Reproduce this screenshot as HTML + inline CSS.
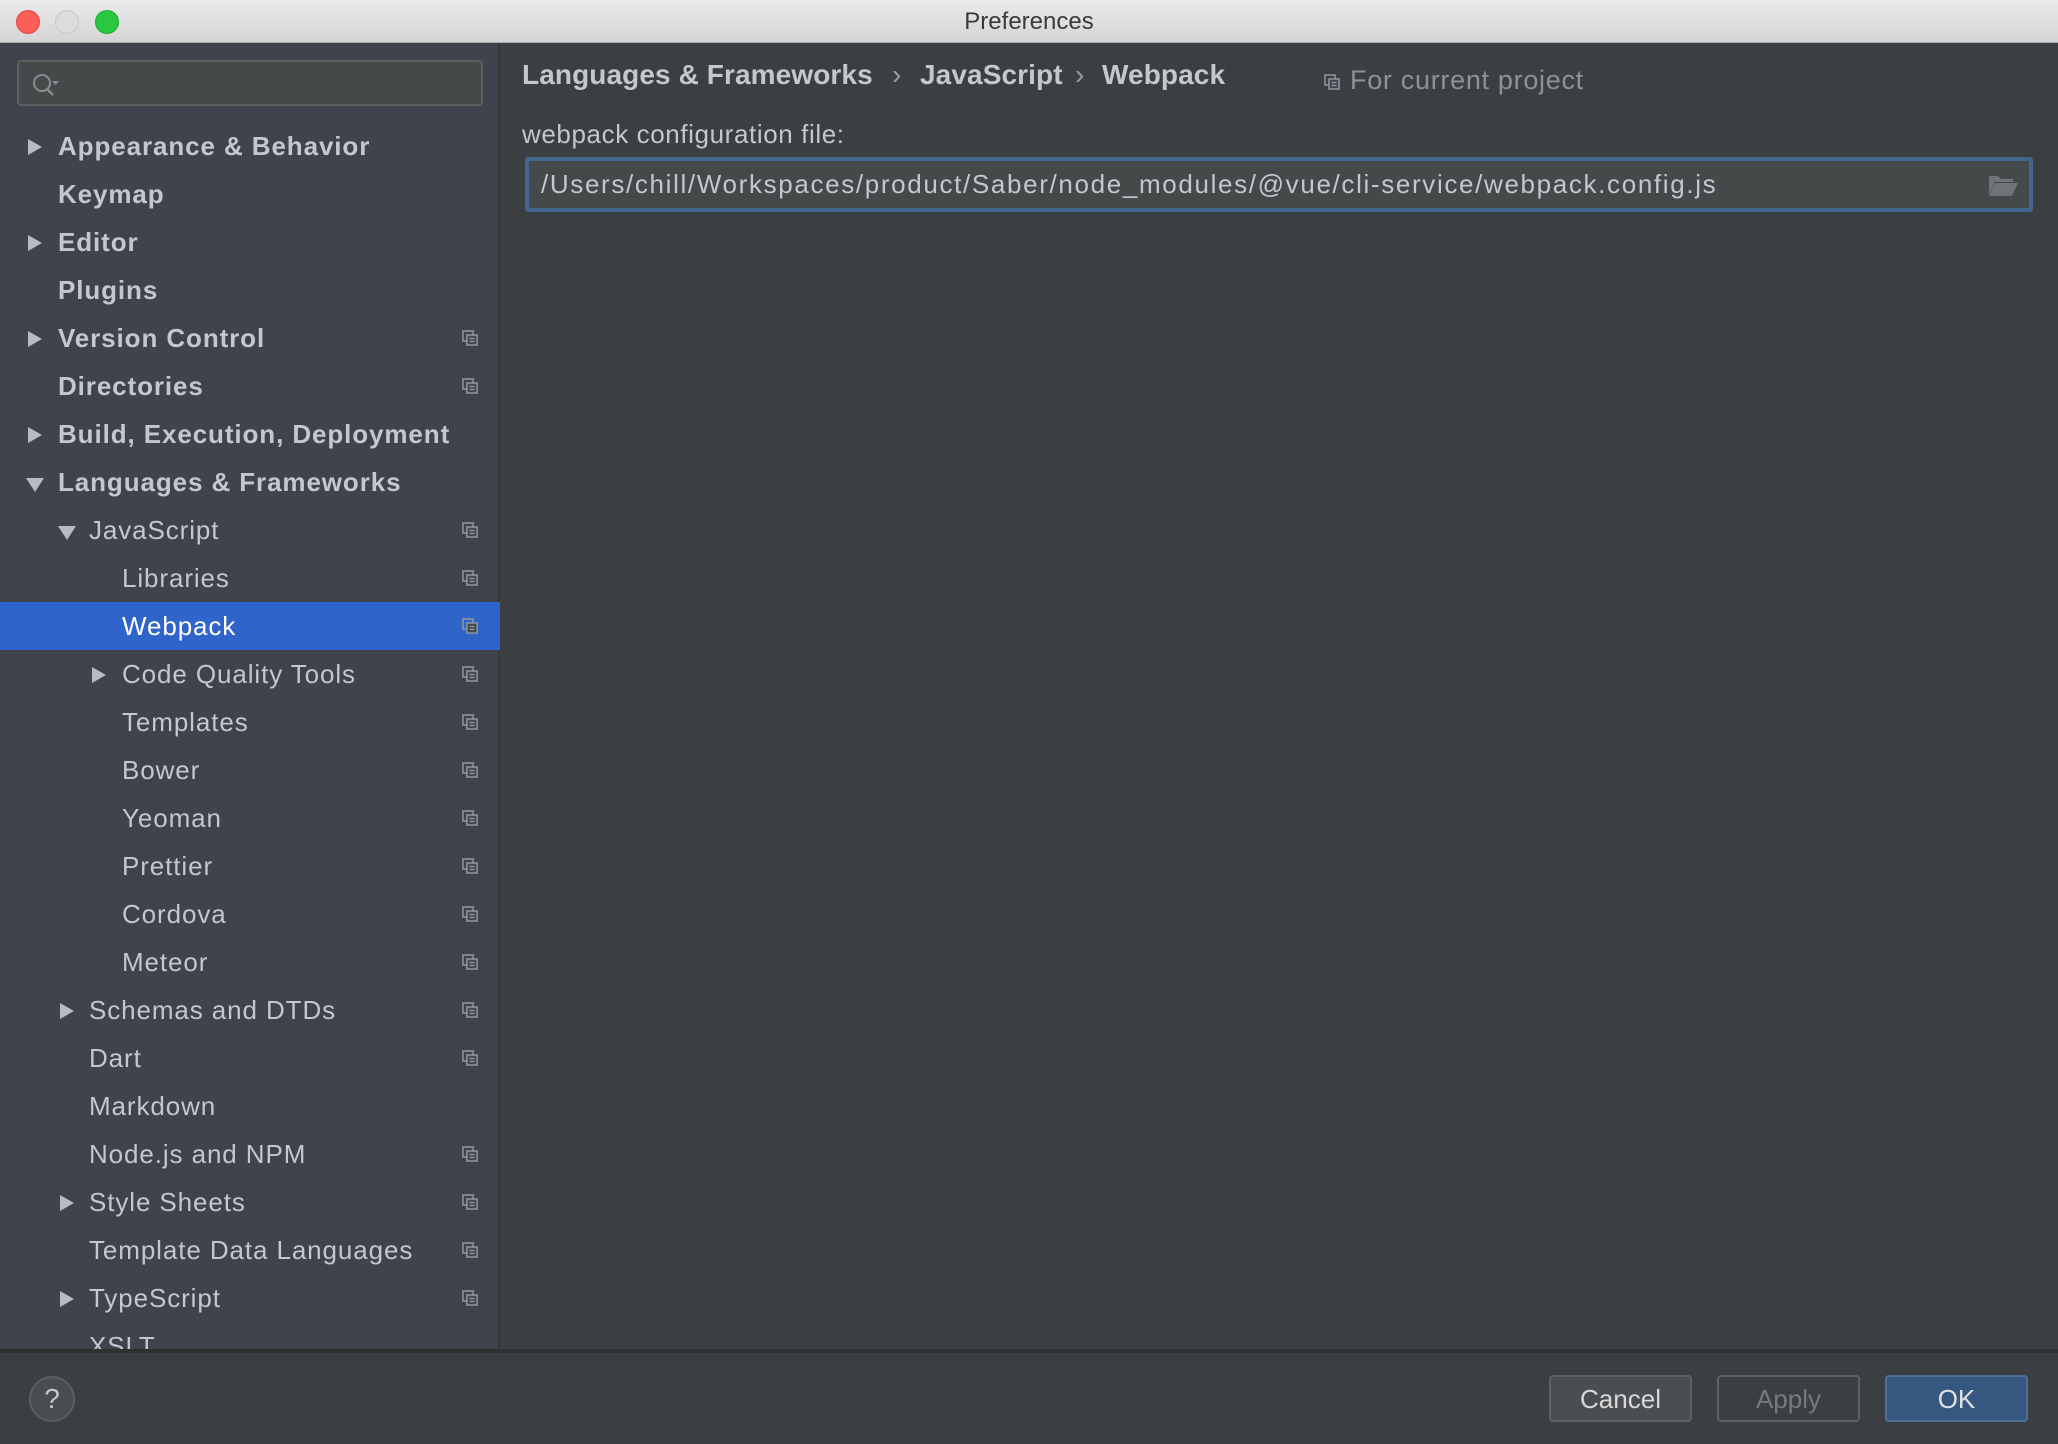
<!DOCTYPE html>
<html><head><meta charset="utf-8"><style>
*{margin:0;padding:0;box-sizing:border-box}
body{width:2058px;height:1444px;overflow:hidden;background:#3c3f41;font-family:"Liberation Sans",sans-serif;position:relative}
.title{position:absolute;left:0;top:0;width:2058px;height:43px;background:linear-gradient(#ebebeb,#d4d4d4);border-bottom:1px solid #a9a9a9;text-align:center;line-height:44px;font-size:24px;color:#3a3a3a}
.dot{position:absolute;top:10px;width:24px;height:24px;border-radius:50%}
.side{position:absolute;left:0;top:43px;width:500px;height:1306px;background:#3e434c;border-right:2px solid #353739;overflow:hidden}
.search{position:absolute;left:17px;top:17px;width:466px;height:46px;background:#45494a;border:2px solid #5e6060;border-radius:4px}
.row{position:absolute;left:0;width:500px;height:48px;line-height:48px;font-size:26px;letter-spacing:0.9px;color:#c4c7cc}
.row.b{font-weight:bold;letter-spacing:0.9px}
.row.sel{background:#2f65ca;color:#fff}
.arr{position:absolute;top:17px;width:0;height:0;border-top:8px solid transparent;border-bottom:8px solid transparent;border-left:14px solid #b8bbbf}
.down{position:absolute;top:20px;width:0;height:0;border-left:9px solid transparent;border-right:9px solid transparent;border-top:14px solid #b8bbbf}
.pi{position:absolute;left:462px;top:16px}
.main{position:absolute;left:502px;top:43px;width:1556px;height:1306px;background:#3c3f41}
.bc{position:absolute;top:16px;font-size:28px;letter-spacing:0.1px;font-weight:bold;color:#c4c7cc}
.foot{position:absolute;left:0;top:1349px;width:2058px;height:95px;background:#3c3f41;border-top:4px solid #2e3032}
.btn{position:absolute;top:22px;width:143px;height:47px;border-radius:4px;text-align:center;line-height:45px;font-size:26px}
</style></head><body>
<div class="title">Preferences
<div class="dot" style="left:16px;background:#fc5f57;border:1px solid #df4744"></div>
<div class="dot" style="left:55px;background:#dcdcdc;border:1px solid #c8c8c8"></div>
<div class="dot" style="left:95px;background:#28c940;border:1px solid #1aab29"></div>
</div>
<svg width="0" height="0" style="position:absolute"><defs><symbol id="pi" viewBox="0 0 16 16"><rect x="1" y="1" width="10" height="10" fill="none" stroke="#8c939b" stroke-width="1.6"/><rect x="5" y="5" width="10" height="10" fill="#3e434c" stroke="#8c939b" stroke-width="1.6"/><path d="M7.5 8.5h5M7.5 11.5h5" stroke="#8c939b" stroke-width="1.4"/></symbol></defs></svg>
<div class="side">
<div class="search"><svg width="40" height="40" style="position:absolute;left:8px;top:2px" viewBox="0 0 40 40"><circle cx="15" cy="19" r="8" fill="none" stroke="#8a8d90" stroke-width="2"/><path d="M20 25l6 6" stroke="#8a8d90" stroke-width="2.5"/><path d="M25 17h7l-3.5 4z" fill="#8a8d90"/></svg></div>
</div>
<div id="rows"></div>
<div class="main">
<div class="bc" style="left:20px">Languages &amp; Frameworks</div>
<div class="bc" style="left:390px;font-weight:normal;color:#9a9da0">›</div>
<div class="bc" style="left:418px">JavaScript</div>
<div class="bc" style="left:573px;font-weight:normal;color:#9a9da0">›</div>
<div class="bc" style="left:600px">Webpack</div>
<svg width="16" height="16" style="position:absolute;left:822px;top:31px"><use href="#pi"/></svg>
<div style="position:absolute;left:848px;top:22px;font-size:27px;letter-spacing:0.7px;color:#8e9195">For current project</div>
<div style="position:absolute;left:20px;top:76px;font-size:26px;letter-spacing:0.6px;color:#c4c7cc">webpack configuration file:</div>
<div style="position:absolute;left:23px;top:114px;width:1508px;height:55px;border:4px solid #41678f;border-radius:3px;background:#45494a">
<div style="position:absolute;left:12px;top:8px;font-size:26px;letter-spacing:1.65px;color:#c4c7cc;white-space:nowrap">/Users/chill/Workspaces/product/Saber/node_modules/@vue/cli-service/webpack.config.js</div>
<svg width="32" height="24" style="position:absolute;right:10px;top:12px" viewBox="0 0 32 24"><path d="M2 3h9l3 3h12v3H8L2 22z" fill="#6f7478"/><path d="M8 10h23l-6 13H2z" fill="#6f7478"/></svg>
</div>
</div>
<div class="foot">
<div style="position:absolute;left:29px;top:23px;width:46px;height:46px;border-radius:50%;background:#4a4d50;border:2px solid #5a5d60;color:#c4c7cc;font-size:28px;text-align:center;line-height:42px">?</div>
<div class="btn" style="left:1549px;background:#4b4e51;border:2px solid #5e6164;color:#d8d8d8">Cancel</div>
<div class="btn" style="left:1717px;background:#3c3f41;border:2px solid #5e6164;color:#777a7d">Apply</div>
<div class="btn" style="left:1885px;background:#365880;border:2px solid #4c6f96;color:#e0e0e0">OK</div>
</div>
<script>
var items=[[0,'r','Appearance & Behavior',1,0],[0,'','Keymap',1,0],[0,'r','Editor',1,0],[0,'','Plugins',1,0],[0,'r','Version Control',1,1],[0,'','Directories',1,1],[0,'r','Build, Execution, Deployment',1,0],[0,'d','Languages & Frameworks',1,0],[1,'d','JavaScript',0,1],[2,'','Libraries',0,1],[2,'','Webpack',0,1,1],[2,'r','Code Quality Tools',0,1],[2,'','Templates',0,1],[2,'','Bower',0,1],[2,'','Yeoman',0,1],[2,'','Prettier',0,1],[2,'','Cordova',0,1],[2,'','Meteor',0,1],[1,'r','Schemas and DTDs',0,1],[1,'','Dart',0,1],[1,'','Markdown',0,0],[1,'','Node.js and NPM',0,1],[1,'r','Style Sheets',0,1],[1,'','Template Data Languages',0,1],[1,'r','TypeScript',0,1],[1,'','XSLT',0,0]];
var tx=[58,89,122],ax=[28,60,92],h='';
items.forEach(function(it,i){var top=122+i*48;var hh=Math.min(48,1349-top);if(hh<=0)return;
h+='<div class="row'+(it[3]?' b':'')+(it[5]?' sel':'')+'" style="top:'+top+'px;height:'+hh+'px;overflow:hidden">';
if(it[1]=='r')h+='<div class="arr" style="left:'+ax[it[0]]+'px"></div>';
if(it[1]=='d')h+='<div class="down" style="left:'+(ax[it[0]]-2)+'px"></div>';
h+='<span style="position:absolute;left:'+tx[it[0]]+'px">'+it[2].replace('&','&amp;')+'</span>';
if(it[4])h+='<svg class="pi" width="16" height="16"><use href="#pi"/></svg>';
h+='</div>';});
document.getElementById('rows').innerHTML=h;
</script>
</body></html>
